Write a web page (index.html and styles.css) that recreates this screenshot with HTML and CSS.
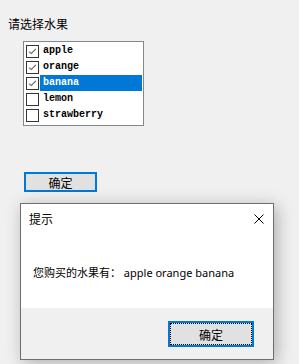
FILE: index.html
```html
<!DOCTYPE html>
<html lang="zh">
<head>
	<meta charset="UTF-8">
	<title>水果</title>
	<link rel="stylesheet" href="styles.css">
</head>
<body>
	<div class="page">
		<div class="prompt">请选择水果</div>
		<div class="listbox">
			<div class="item"><span class="check"><svg width="13" height="13" viewBox="0 0 13 13"><path d="M2.5 6.5 L5 9 L10.5 3.5" fill="none" stroke="#555" stroke-width="1.2"/></svg></span><span class="label">apple</span></div>
			<div class="item"><span class="check"><svg width="13" height="13" viewBox="0 0 13 13"><path d="M2.5 6.5 L5 9 L10.5 3.5" fill="none" stroke="#555" stroke-width="1.2"/></svg></span><span class="label">orange</span></div>
			<div class="item selected"><span class="check"><svg width="13" height="13" viewBox="0 0 13 13"><path d="M2.5 6.5 L5 9 L10.5 3.5" fill="none" stroke="#555" stroke-width="1.2"/></svg></span><span class="label">banana</span></div>
			<div class="item"><span class="check"></span><span class="label">lemon</span></div>
			<div class="item"><span class="check"></span><span class="label">strawberry</span></div>
		</div>
		<button class="btn">确定</button>
	</div>

	<div class="dialog">
		<div class="dlg-head">
			<span class="dlg-title">提示</span>
			<span class="dlg-close"><svg width="10" height="10" viewBox="0 0 10 10"><path d="M0.5 0.5 L9.5 9.5 M9.5 0.5 L0.5 9.5" stroke="#000" stroke-width="1"/></svg></span>
		</div>
		<div class="dlg-body"><span class="cn">您购买的水果有：</span> apple orange banana</div>
		<div class="dlg-foot">
			<button class="dlg-btn">确定</button>
		</div>
	</div>
</body>
</html>
```

FILE: styles.css
```css
body {
	margin: 0;
	background-color: #f0f0f0;
	font-family: "Noto Sans", "Noto Sans CJK SC", sans-serif;
	font-size: 12px;
	color: #000;
}
.page {
	display: flex;
	flex-direction: column;
	align-items: flex-start;
	padding: 17px 0 0 8px;
}
.prompt {
	line-height: 16px;
}
.listbox {
	margin: 8px 0 0 15px;
	width: 121px;
	height: 85px;
	box-sizing: border-box;
	border: 1px solid #828790;
	background-color: #fff;
	padding: 1px 1px 1px 2px;
}
.item {
	display: flex;
	align-items: center;
	height: 16px;
}
.check {
	width: 13px;
	height: 13px;
	box-sizing: border-box;
	border: 1px solid #333;
	background-color: #fff;
	flex: none;
	display: flex;
	align-items: center;
	justify-content: center;
}
.check svg {
	display: block;
}
.label {
	flex: 1;
	margin-left: 1px;
	padding-left: 3px;
	height: 16px;
	line-height: 16px;
	font-family: "Liberation Mono", "DejaVu Sans Mono", monospace;
	font-size: 10px;
	font-weight: bold;
}
.selected .label {
	background-color: #0078d7;
	color: #fff;
}
.btn {
	margin: 46px 0 0 16px;
	width: 73px;
	height: 20px;
	padding: 0;
	border: 2px solid #0078d7;
	background-color: #e1e1e1;
	font-family: "Noto Sans CJK SC", sans-serif;
	font-size: 12px;
	color: #000;
}
.dialog {
	position: absolute;
	left: 20px;
	top: 203px;
	width: 254px;
	height: 157px;
	box-sizing: border-box;
	border: 1px solid #6e6e6e;
	background-color: #fff;
	box-shadow: 3px 3px 16px rgba(0, 0, 0, 0.28);
	display: flex;
	flex-direction: column;
}
.dlg-head {
	height: 30px;
	display: flex;
	align-items: center;
	justify-content: space-between;
	padding: 0 9px 0 8px;
}
.dlg-title {
	font-family: "Noto Sans CJK SC", sans-serif;
	line-height: 16px;
}
.dlg-close svg {
	display: block;
}
.dlg-body {
	flex: 1;
	padding: 30px 0 0 12px;
	line-height: 16px;
	font-size: 11px;
	white-space: nowrap;
}
.cn {
	font-family: "Noto Sans CJK SC", sans-serif;
}
.dlg-foot {
	height: 51px;
	background-color: #f0f0f0;
	display: flex;
	justify-content: flex-end;
	align-items: flex-start;
	padding: 13px 19px 0 0;
	box-sizing: border-box;
}
.dlg-btn {
	width: 86px;
	height: 26px;
	padding: 0;
	border: 2px solid #0078d7;
	background-color: #e1e1e1;
	outline: 1px dotted #000;
	outline-offset: -3px;
	font-family: "Noto Sans CJK SC", sans-serif;
	font-size: 12px;
	color: #000;
}
```
